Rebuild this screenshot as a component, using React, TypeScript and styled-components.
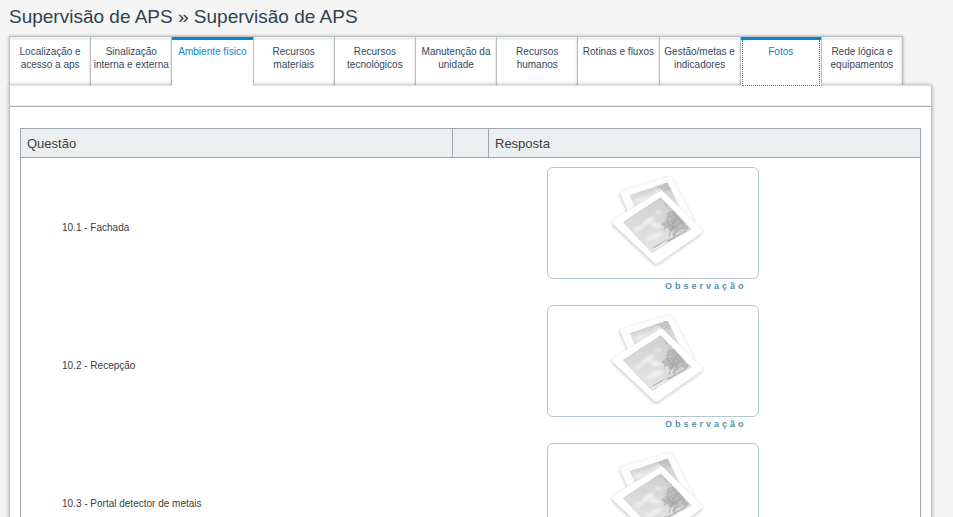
import React from "react";
import styled, { createGlobalStyle, css } from "styled-components";

const GlobalStyle = createGlobalStyle`
  *, *::before, *::after { box-sizing: border-box; }
  body {
    margin: 0;
    background: #f5f5f5;
    color: #444;
    font-family: "Liberation Sans", Arial, Helvetica, sans-serif;
    font-size: 10px;
  }
`;

const Page = styled.main`
  min-height: 100vh;
  padding: 6px 21px 0 9px;
`;

const Title = styled.h1`
  margin: 0;
  font-size: 19px;
  line-height: 22px;
  font-weight: 400;
  color: #2f4250;
`;

const TabList = styled.ul`
  display: flex;
  margin: 8px 29px 0 0;
  padding: 0;
  list-style: none;
  border-left: 1px solid #bdc3c7;
  box-shadow: 0 0 3px rgba(0, 0, 0, 0.3);
`;

const Tab = styled.li<{ $active?: boolean }>`
  flex: 1 1 0;
  display: flex;
  flex-direction: column;
  min-width: 0;
  height: 49px;
  background: #fff;
  border-top: 1px solid #b8c0c4;
  border-right: 1px solid #b8bfc3;
  box-shadow: inset -2px 0 2px -1px rgba(0, 0, 0, 0.1);
  &::before {
    content: "";
    height: 3px;
    background: ${(p) => (p.$active ? "#0a84cc" : "#ecf0f1")};
  }
  ${(p) =>
    p.$active &&
    css`
      position: relative;
      z-index: 1;
      margin-bottom: -1px;
      height: 50px;
      box-shadow: none;
    `}
`;

const TabLink = styled.a<{ $active?: boolean; $focused?: boolean }>`
  flex: 1;
  padding-top: 5px;
  color: ${(p) => (p.$active ? "#0a84cc" : "#34495e")};
  line-height: 13px;
  text-align: center;
  text-decoration: none;
  ${(p) =>
    p.$focused &&
    css`
      margin: 0 1px;
      border: 1px dotted #0a84cc;
      border-top: 0;
    `}
`;

const Panel = styled.section`
  position: relative;
  background: #fff;
  border: 1px solid #c4c7c9;
  border-top-color: #dcdedf;
  border-bottom: 0;
  box-shadow: 0 0 4px rgba(0, 0, 0, 0.35);
`;

const PanelBar = styled.div`
  height: 21px;
  border-bottom: 1px solid #a4aaae;
  box-shadow: inset 0 -2px 2px -1px rgba(0, 0, 0, 0.08);
`;

const PanelBody = styled.div`
  padding: 21px 10px 0;
`;

const Grid = styled.table`
  width: 100%;
  table-layout: fixed;
  border-collapse: collapse;
  border: 1px solid #9ba6af;
`;

const NarrowCol = styled.col`
  width: 36px;
`;

const HeadCell = styled.th`
  height: 29px;
  padding: 2px 6px 0;
  border: 1px solid #9ba6af;
  background: #ebeff0;
  font-size: 13px;
  line-height: 16px;
  font-weight: 400;
  text-align: left;
  color: #404040;
`;

const QuestionCell = styled.td`
  height: 138px;
  padding: 2px 0 0 41px;
  color: #3c3c3c;
  line-height: 13px;
`;

const AnswerCell = styled.td`
  padding: 9px 0 0 58px;
  vertical-align: top;
`;

const Answer = styled.div`
  display: flex;
  flex-direction: column;
  align-items: flex-end;
  width: 212px;
`;

const PhotoButton = styled.button`
  display: flex;
  align-items: center;
  justify-content: center;
  width: 100%;
  height: 112px;
  padding: 0;
  border: 1px solid #b4c6d3;
  border-radius: 6px;
  background: #fff;
  cursor: pointer;
`;

const NoteLink = styled.a`
  margin: 1px 12px 0 0;
  color: #4f93b0;
  font-size: 9px;
  line-height: 12px;
  font-weight: 700;
  letter-spacing: 3px;
  text-decoration: none;
`;

const leaves = [
  [214, 140, 7], [226, 147, 8], [207, 152, 8], [219, 160, 10], [236, 160, 8],
  [200, 166, 8], [211, 176, 11], [229, 177, 12], [246, 174, 8], [196, 184, 7],
  [213, 192, 8], [232, 194, 10], [250, 188, 9], [262, 190, 6], [206, 135, 4],
  [192, 174, 5], [223, 206, 6],
];

function PhotoStack({ id }: { id: string }) {
  return (
    <svg width="110" height="100" viewBox="-6 24 330 300" aria-hidden="true" colorInterpolationFilters="sRGB">
      <defs>
        <linearGradient id={`${id}-sky`} x1="0.6" y1="0" x2="0.5" y2="1">
          <stop offset="0" stopColor="#cfcfcf" />
          <stop offset="0.5" stopColor="#dbdbdb" />
          <stop offset="1" stopColor="#e6e6e6" />
        </linearGradient>
        <filter id={`${id}-shadow`} x="-20%" y="-20%" width="140%" height="140%">
          <feDropShadow dx="-1" dy="5" stdDeviation="4" floodColor="#000" floodOpacity="0.2" />
        </filter>
        <filter id={`${id}-soft`} x="-50%" y="-50%" width="200%" height="200%">
          <feGaussianBlur stdDeviation="4" />
        </filter>
        <filter id={`${id}-leaf`} x="-20%" y="-20%" width="140%" height="140%">
          <feTurbulence type="fractalNoise" baseFrequency="0.12" numOctaves="2" seed="4" />
          <feDisplacementMap in="SourceGraphic" scale="20" xChannelSelector="R" yChannelSelector="G" />
        </filter>
        <clipPath id={`${id}-front`}>
          <path d="M68 172 182 97 275 193 155 265Z" />
        </clipPath>
        <clipPath id={`${id}-back`}>
          <path d="M88 90 203 52 254 155 118 155Z" />
        </clipPath>
      </defs>

      <path
        d="M67 76 205 34Q213 32 217 40L280 157Q283 164 277 168L116 200Q108 201 106 193L61 86Q58 79 67 76Z"
        fill="#fdfdfd" stroke="#ededed" strokeWidth="1.5" filter={`url(#${id}-shadow)`}
      />
      <g clipPath={`url(#${id}-back)`}>
        <path d="M88 90 203 52 254 155 118 155Z" fill={`url(#${id}-sky)`} />
        <path d="M92 110 118 97 145 90 180 68 190 78 130 115Z" fill="#eee" filter={`url(#${id}-soft)`} />
        <path d="M154 69 203 52 215 77 190 76 176 69Z" fill="#c2c2c2" filter={`url(#${id}-leaf)`} />
        <path d="M200 92 210 98 240 160 228 160Z" fill="#a4a4a4" filter={`url(#${id}-leaf)`} />
      </g>

      <path
        d="M41 163 179 79Q185 75 191 81L305 192Q311 198 304 204L175 294Q168 299 162 293L39 177Q34 168 41 163Z"
        fill="#fff" stroke="#ececec" strokeWidth="1.5" filter={`url(#${id}-shadow)`}
      />
      <g clipPath={`url(#${id}-front)`}>
        <path d="M68 172 182 97 275 193 155 265Z" fill={`url(#${id}-sky)`} />
        <g fill="#f2f2f2" filter={`url(#${id}-soft)`}>
          <ellipse cx="145" cy="168" rx="22" ry="7" transform="rotate(-35 145 168)" />
          <ellipse cx="166" cy="181" rx="16" ry="7" transform="rotate(15 166 181)" />
          <ellipse cx="116" cy="190" rx="16" ry="5" transform="rotate(-20 116 190)" />
          <ellipse cx="175" cy="142" rx="10" ry="4" />
          <ellipse cx="163" cy="215" rx="28" ry="7" transform="rotate(-25 163 215)" />
        </g>
        <path d="M180 98 204 122 200 128 193 114Z" fill="#bbb" />
        <path d="M152 252 200 222 270 188 280 196 158 270Z" fill="#dadada" />
        <path d="M160 248 196 229 212 224M198 232 256 198" stroke="#b4b4b4" strokeWidth="4" fill="none" />
        <path d="M154 258 202 228M172 254 246 210" stroke="#f6f6f6" strokeWidth="4" fill="none" />
        <path d="M205 122 238 157 266 187 246 180Z" fill="#b8b8b8" filter={`url(#${id}-leaf)`} />
        <g fill="#a8a8a8" filter={`url(#${id}-leaf)`}>
          {leaves.map(([cx, cy, r]) => (
            <circle key={`${cx}-${cy}`} cx={cx} cy={cy} r={r} opacity="0.65" />
          ))}
        </g>
        <path d="M206 216 217 187 229 156M218 188 203 174M216 193 239 174" stroke="#999" strokeWidth="2" fill="none" />
        <path d="M68 172 182 97 275 193" stroke="#c8c8c8" strokeWidth="3" fill="none" />
      </g>
    </svg>
  );
}

const tabs = [
  { label: "Localização e acesso a aps" },
  { label: "Sinalização interna e externa" },
  { label: "Ambiente físico", active: true },
  { label: "Recursos materiais" },
  { label: "Recursos tecnológicos" },
  { label: "Manutenção da unidade" },
  { label: "Recursos humanos" },
  { label: "Rotinas e fluxos" },
  { label: "Gestão/metas e indicadores" },
  { label: "Fotos", active: true, focused: true },
  { label: "Rede lógica e equipamentos" },
];

const questions = [
  { id: "q1", text: "10.1 - Fachada" },
  { id: "q2", text: "10.2 - Recepção" },
  { id: "q3", text: "10.3 - Portal detector de metais" },
];

export default function App() {
  return (
    <>
      <GlobalStyle />
      <Page>
        <Title>Supervisão de APS » Supervisão de APS</Title>
        <nav>
          <TabList>
            {tabs.map((tab) => (
              <Tab key={tab.label} $active={tab.active}>
                <TabLink href="#" $active={tab.active} $focused={tab.focused}>
                  {tab.label}
                </TabLink>
              </Tab>
            ))}
          </TabList>
        </nav>
        <Panel>
          <PanelBar />
          <PanelBody>
            <Grid>
              <colgroup>
                <col />
                <NarrowCol />
                <col />
              </colgroup>
              <thead>
                <tr>
                  <HeadCell scope="col">Questão</HeadCell>
                  <HeadCell as="td" />
                  <HeadCell scope="col">Resposta</HeadCell>
                </tr>
              </thead>
              <tbody>
                {questions.map((q) => (
                  <tr key={q.id}>
                    <QuestionCell id={q.id}>{q.text}</QuestionCell>
                    <td />
                    <AnswerCell>
                      <Answer>
                        <PhotoButton type="button" aria-labelledby={q.id}>
                          <PhotoStack id={`${q.id}-photo`} />
                        </PhotoButton>
                        <NoteLink href="#">Observação</NoteLink>
                      </Answer>
                    </AnswerCell>
                  </tr>
                ))}
              </tbody>
            </Grid>
          </PanelBody>
        </Panel>
      </Page>
    </>
  );
}
